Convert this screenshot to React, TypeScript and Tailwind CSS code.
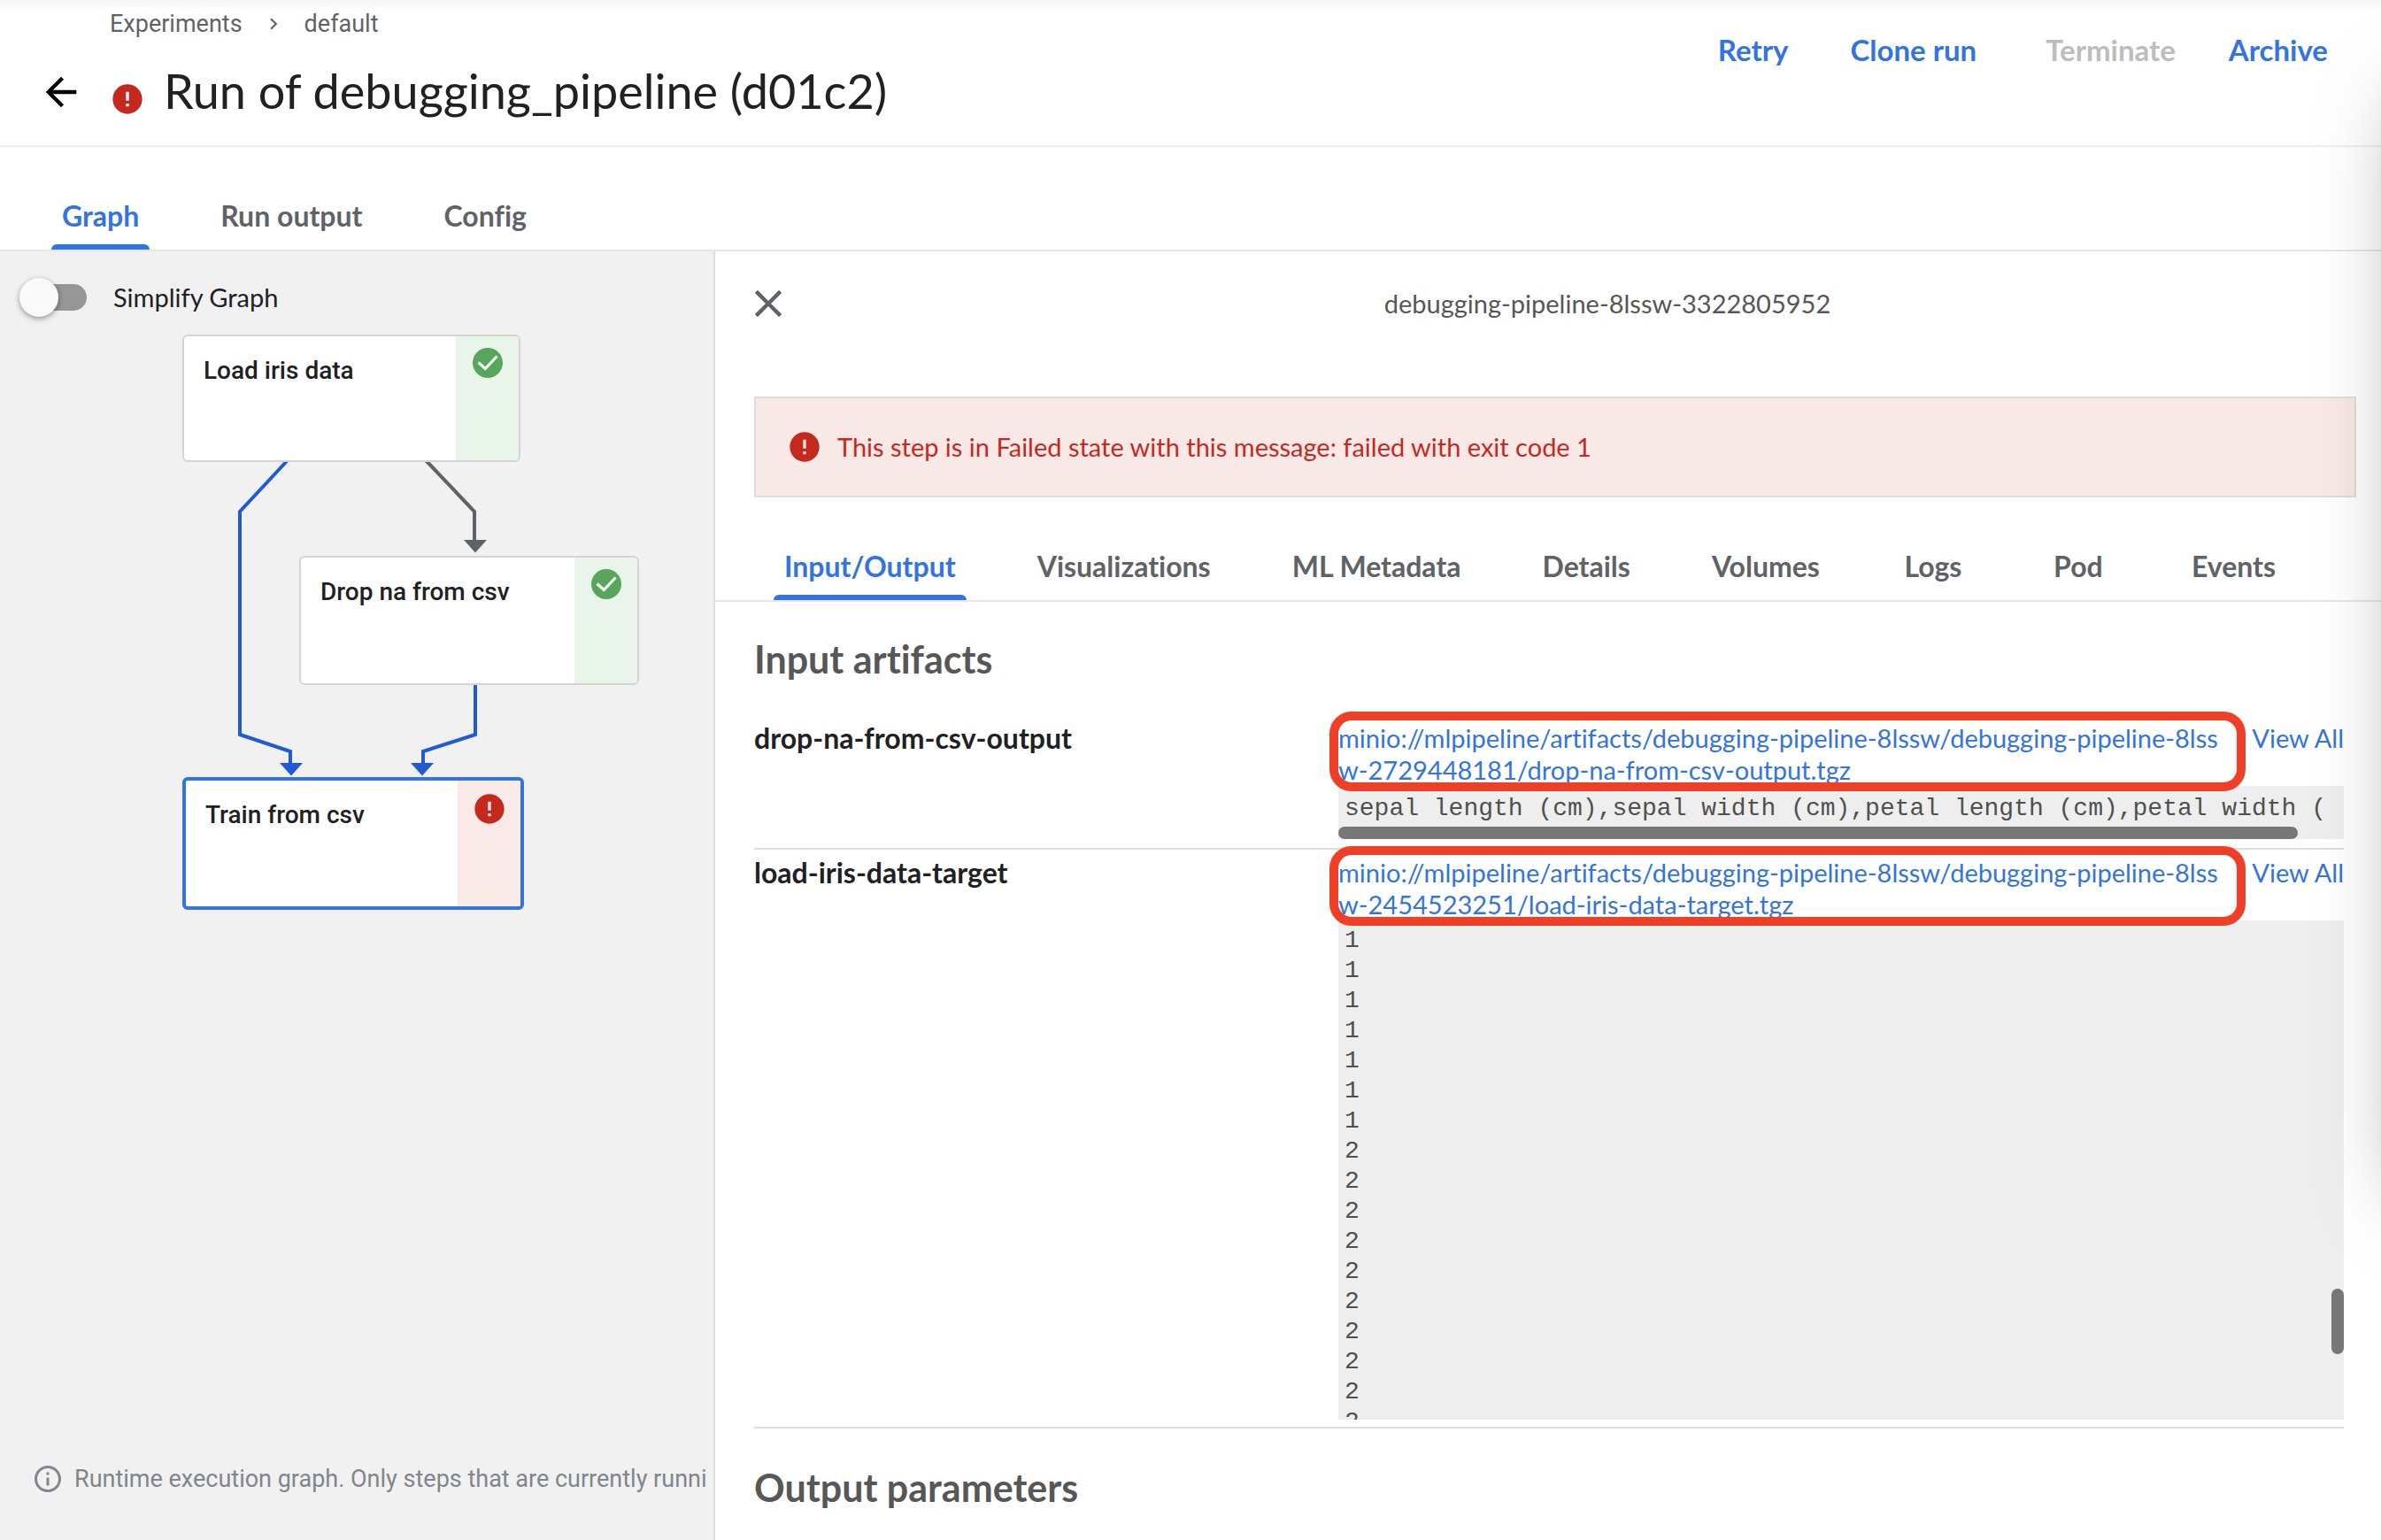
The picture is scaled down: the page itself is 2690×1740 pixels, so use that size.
import React, { useState } from "react";

function ArrowBackIcon({ className }: { className?: string }) {
  return (
    <svg viewBox="0 0 24 24" fill="currentColor" className={className} aria-hidden="true">
      <path d="M20 11H7.83l5.59-5.59L12 4l-8 8 8 8 1.41-1.41L7.83 13H20v-2z" />
    </svg>
  );
}

function ErrorIcon({ className }: { className?: string }) {
  return (
    <svg viewBox="0 0 24 24" fill="currentColor" className={className} aria-hidden="true">
      <path d="M12 2C6.48 2 2 6.48 2 12s4.48 10 10 10 10-4.48 10-10S17.52 2 12 2zm1 15h-2v-2h2v2zm0-4h-2V7h2v6z" />
    </svg>
  );
}

function SuccessIcon({ className }: { className?: string }) {
  return (
    <svg viewBox="0 0 34 34" className={className} aria-hidden="true">
      <circle cx="17" cy="17" r="17" fill="#58a55c" />
      <path d="M6.5 16.5L14.3 23.5L27.5 9.5" fill="none" stroke="#f3faf4" strokeWidth="3.2" />
    </svg>
  );
}

function CloseIcon({ className }: { className?: string }) {
  return (
    <svg viewBox="0 0 24 24" fill="currentColor" className={className} aria-hidden="true">
      <path d="M19 6.41L17.59 5 12 10.59 6.41 5 5 6.41 10.59 12 5 17.59 6.41 19 12 13.41 17.59 19 19 17.59 13.41 12z" />
    </svg>
  );
}

function InfoIcon({ className }: { className?: string }) {
  return (
    <svg viewBox="0 0 24 24" fill="currentColor" className={className} aria-hidden="true">
      <path d="M11 7h2v2h-2zm0 4h2v6h-2zm1-9C6.48 2 2 6.48 2 12s4.48 10 10 10 10-4.48 10-10S17.52 2 12 2zm0 18c-4.41 0-8-3.59-8-8s3.59-8 8-8 8 3.59 8 8-3.59 8-8 8z" />
    </svg>
  );
}

function ChevronIcon({ className }: { className?: string }) {
  return (
    <svg viewBox="0 0 24 24" fill="currentColor" className={className} aria-hidden="true">
      <path d="M10 6L8.59 7.41 13.17 12l-4.58 4.59L10 18l6-6z" />
    </svg>
  );
}

function Tabs({ items, className }: { items: string[]; className: string }) {
  const [active, setActive] = useState(0);
  return (
    <div role="tablist" className={`flex border-b-2 border-[#e6e6e6] ${className}`}>
      {items.map((item, i) => (
        <button
          key={item}
          role="tab"
          aria-selected={i === active}
          onClick={() => setActive(i)}
          className={`relative min-w-[164px] px-[46px] pb-[18px] text-[32px] leading-10 font-bold whitespace-nowrap ${
            i === active ? "text-[#3374e0]" : "text-[#5f6368]"
          }`}
        >
          {item}
          {i === active && <span className="absolute inset-x-[34px] bottom-0 h-1.5 rounded-t-md bg-[#3374e0]" />}
        </button>
      ))}
    </div>
  );
}

const actions = [
  { label: "Retry", disabled: false, style: "text-[#3374e0]" },
  { label: "Clone run", disabled: false, style: "text-[#3374e0] ml-[70px]" },
  { label: "Terminate", disabled: true, style: "text-[#bdbdbd] ml-[78px]" },
  { label: "Archive", disabled: false, style: "text-[#3374e0] ml-[60px]" },
];

function Header() {
  return (
    <header className="flex items-start justify-between border-b-2 border-[#eeeeee] pt-[9px] pb-[29px]">
      <div>
        <nav aria-label="Breadcrumb" className="flex items-center pl-[124px] font-[Roboto,sans-serif] text-[27px] leading-9 text-[#5f6368]">
          <a href="#experiments">Experiments</a>
          <ChevronIcon className="mx-[22px] size-[26px]" />
          <a href="#default">default</a>
        </nav>
        <div className="mt-[26px] flex items-end pl-[43px]">
          <button aria-label="Back" className="mb-[5px] text-black">
            <ArrowBackIcon className="size-[52px]" />
          </button>
          <ErrorIcon className="mb-[3px] ml-[29px] size-10 text-[#c5291e]" />
          <h1 className="ml-[21px] text-[54px] leading-16 whitespace-nowrap text-[#202124]">Run of debugging_pipeline (d01c2)</h1>
        </div>
      </div>
      <div className="flex pt-[27px] pr-[60px]">
        {actions.map((a) => (
          <button key={a.label} disabled={a.disabled} className={`text-[33px] leading-10 font-bold ${a.style}`}>
            {a.label}
          </button>
        ))}
      </div>
    </header>
  );
}

type NodeProps = { label: string; failed?: boolean; selected?: boolean; place: string };

function GraphNode({ label, failed, selected, place }: NodeProps) {
  return (
    <button
      className={`absolute flex overflow-hidden rounded-md bg-white text-left ${
        selected ? "border-4 border-[#3374e0]" : "border-2 border-[#d4d4d4]"
      } ${place}`}
    >
      <span className="flex-1 pt-[21px] pl-[22px] font-[Roboto,sans-serif] text-[28px] leading-9 font-medium text-[#202124]">{label}</span>
      <span className={`flex w-[71px] justify-center self-stretch ${failed ? "bg-[#f9e9e7] pt-[12px]" : "bg-[#e9f4eb] pt-[13px]"}`}>
        {failed ? <ErrorIcon className="size-10 text-[#c5291e]" /> : <SuccessIcon className="size-[34px]" />}
      </span>
    </button>
  );
}

function GraphPanel() {
  return (
    <aside className="flex w-[808px] shrink-0 flex-col overflow-hidden border-r-2 border-[#dddddd] bg-[#f1f1f1] pt-[30px]">
      <label className="flex items-center pl-[22px] text-[29px] leading-9 text-[#202124]">
        <input type="checkbox" className="peer sr-only" />
        <span className="relative mr-[30px] flex h-11 w-[76px] items-center">
          <span className="ml-[3px] h-[30px] w-full rounded-full bg-[#969696]" />
          <span className="absolute left-0 size-11 rounded-full bg-[#fafafa] shadow-[0_2px_6px_rgba(0,0,0,0.4)]" />
        </span>
        Simplify Graph
      </label>
      <div className="relative min-h-[700px] flex-1">
        <svg width="800" height="700" viewBox="0 0 800 700" className="absolute top-0 left-0" aria-hidden="true">
          <g fill="none" stroke="#1f5bd6" strokeWidth="4">
            <path d="M325 162L271 220V472L328 491V506" />
            <path d="M537 414V472L478 491V506" />
          </g>
          <path d="M481 162L536 220V254" fill="none" stroke="#5f6368" strokeWidth="4" />
          <path d="M316 504H342L329 518.500Z" fill="#1f5bd6" />
          <path d="M464 504H490L477 518.500Z" fill="#1f5bd6" />
          <path d="M524 252H550L537 266.500Z" fill="#5f6368" />
        </svg>
        <GraphNode label="Load iris data" place="left-[206px] top-[20px] h-36 w-[382px]" />
        <GraphNode label="Drop na from csv" place="left-[338px] top-[270px] h-[146px] w-[384px]" />
        <GraphNode label="Train from csv" failed selected place="left-[206px] top-[520px] h-[150px] w-[386px]" />
      </div>
      <div className="flex items-center pb-[51px] pl-9 font-[Roboto,sans-serif] text-[27px] leading-9 whitespace-nowrap text-[#80868b]">
        <InfoIcon className="mr-3 size-9 shrink-0" />
        <span>Runtime execution graph. Only steps that are currently runni</span>
      </div>
    </aside>
  );
}

type ArtifactProps = { name: string; uri: string; className: string; children: React.ReactNode };

function ArtifactRow({ name, uri, className, children }: ArtifactProps) {
  return (
    <div className={`flex border-b-2 border-[#dddddd] pt-2 ${className}`}>
      <div className="w-[660px] shrink-0 text-[32px] leading-9 font-bold text-[#202124]">{name}</div>
      <div className="relative min-w-0 flex-1">
        <div className="flex h-[72px] items-start text-[29px] leading-9 text-[#3374e0]">
          <a href="#artifact" className="flex-1 break-all">
            {uri}
          </a>
          <a href="#view" className="pl-7 whitespace-nowrap">
            View All
          </a>
        </div>
        {children}
        <span className="pointer-events-none absolute -top-3 right-[111px] -left-2.5 h-[90px] rounded-[25px] border-10 border-[#ed4027]" />
      </div>
    </div>
  );
}

const targetLines = [...Array<string>(7).fill("1"), ...Array<string>(10).fill("2")].join("\n");

const preStyle =
  "relative overflow-hidden bg-[#eeeeee] pl-[7px] font-['Liberation_Mono',monospace] text-[28px] leading-[34px] text-[#505050]";

function DetailsPanel() {
  return (
    <section className="min-w-0 flex-1 pt-[33px]">
      <div className="flex items-center pl-[34px]">
        <button aria-label="Close" className="text-[#5f6368]">
          <CloseIcon className="size-[52px]" />
        </button>
        <h2 className="flex-1 pl-12 text-center text-[29px] leading-9 text-[#575757]">debugging-pipeline-8lssw-3322805952</h2>
      </div>
      <div role="alert" className="mt-[79px] mr-7 ml-11 flex h-[114px] items-center border-2 border-[#dddddd] bg-[#f8e9e7] pl-[35px] text-[29px] leading-9 text-[#c5291e]">
        <ErrorIcon className="mr-[17px] size-10" />
        This step is in Failed state with this message: failed with exit code 1
      </div>
      <Tabs
        className="mt-[58px] pl-8"
        items={["Input/Output", "Visualizations", "ML Metadata", "Details", "Volumes", "Logs", "Pod", "Events"]}
      />
      <div className="mt-[39px] mr-[42px] ml-11">
        <h3 className="text-[43px] leading-[52px] font-bold text-[#575757]">Input artifacts</h3>
        <div className="mt-[37px]">
          <ArtifactRow
            name="drop-na-from-csv-output"
            uri="minio://mlpipeline/artifacts/debugging-pipeline-8lssw/debugging-pipeline-8lssw-2729448181/drop-na-from-csv-output.tgz"
            className="pb-2.5"
          >
            <pre className={`${preStyle} h-[60px] pt-[9px]`}>
              sepal length (cm),sepal width (cm),petal length (cm),petal width (
              <span className="absolute bottom-0 left-0 h-3.5 w-[1084px] rounded-full bg-[#777777]" />
            </pre>
          </ArtifactRow>
          <ArtifactRow
            name="load-iris-data-target"
            uri="minio://mlpipeline/artifacts/debugging-pipeline-8lssw/debugging-pipeline-8lssw-2454523251/load-iris-data-target.tgz"
            className="pb-2"
          >
            <pre className={`${preStyle} h-[564px] pt-[6px]`}>
              {targetLines}
              <span className="absolute right-0 bottom-[74px] h-[74px] w-3.5 rounded-full bg-[#777777]" />
            </pre>
          </ArtifactRow>
        </div>
        <h3 className="mt-[41px] text-[43px] leading-[52px] font-bold text-[#575757]">Output parameters</h3>
      </div>
    </section>
  );
}

export default function App() {
  return (
    <div className="relative flex min-h-screen flex-col overflow-hidden bg-white font-[Lato,sans-serif] [font-variant-ligatures:none]">
      <Header />
      <Tabs className="pt-[58px] pl-6" items={["Graph", "Run output", "Config"]} />
      <main className="flex flex-1">
        <GraphPanel />
        <DetailsPanel />
      </main>
      <div className="pointer-events-none absolute inset-x-0 top-0 h-3 bg-linear-to-b from-black/4 to-transparent" />
      <div className="pointer-events-none absolute top-[120px] -right-[140px] h-[1220px] w-[100px] shadow-[0_0_100px_rgba(0,0,0,0.5)]" />
    </div>
  );
}
